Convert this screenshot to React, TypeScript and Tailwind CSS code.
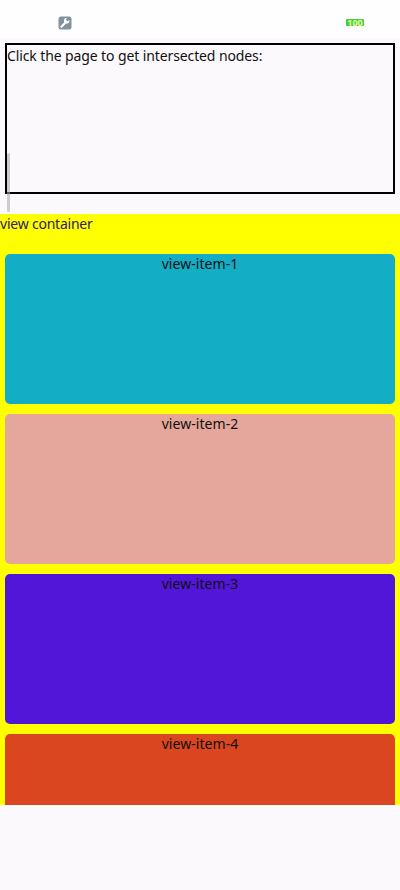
import React from "react";

const items = [
  { name: "view-item-1", color: "bg-[#13adc6]" },
  { name: "view-item-2", color: "bg-[#e5a79b]" },
  { name: "view-item-3", color: "bg-[#5116d8]" },
  { name: "view-item-4", color: "bg-[#d94620]" },
];

function StatusBar() {
  return (
    <header className="mb-[5px] flex h-[38px] shrink-0 items-start justify-between bg-[#fefefe] pl-[58px] pr-[36px] pt-4">
      <svg width="14" height="14" viewBox="0 0 14 14">
        <rect x="0.5" y="0.5" width="13" height="13" rx="2.5" fill="#82929f" />
        <path d="M3.4 10.7 7.8 6.3" stroke="white" strokeWidth="2.2" strokeLinecap="round" />
        <path d="M11.3 4.2a2.7 2.7 0 1 1-2.4-2.1L7.8 3.8l1.5 1.5z" fill="white" />
      </svg>
      <span className="mt-[3px] flex h-[7px] w-[18px] items-center justify-center rounded-[1px] bg-[#49cf31] text-[9px] font-bold leading-none text-[#e2ffb0]">
        100
      </span>
    </header>
  );
}

export default function App() {
  return (
    <main className="flex h-[890px] w-[400px] flex-col overflow-hidden bg-[#fbf9fc] font-['Noto_Sans',sans-serif] text-[14px] leading-[19px] text-[#111]">
      <StatusBar />
      <section className="relative mx-[5px] h-[151px] shrink-0 border-2 border-black">
        <p className="whitespace-nowrap leading-[21px] tracking-[-0.11px]">Click the page to get intersected nodes:</p>
        <i className="absolute left-0 top-[108px] h-[59px] w-[3px] rounded-full bg-[#a9a7aa]/55" />
      </section>
      <section className="mt-[19.5px] h-[591.5px] shrink-0 overflow-hidden bg-[#ffff00]">
        <p className="h-10 tracking-[-0.22px] text-[#302064]">view container</p>
        <div className="flex flex-col gap-2.5 px-[5px]">
          {items.map((item) => (
            <div key={item.name} className={"h-[150px] shrink-0 rounded-[5px] text-center tracking-[0.05px] " + item.color}>
              {item.name}
            </div>
          ))}
        </div>
      </section>
    </main>
  );
}
